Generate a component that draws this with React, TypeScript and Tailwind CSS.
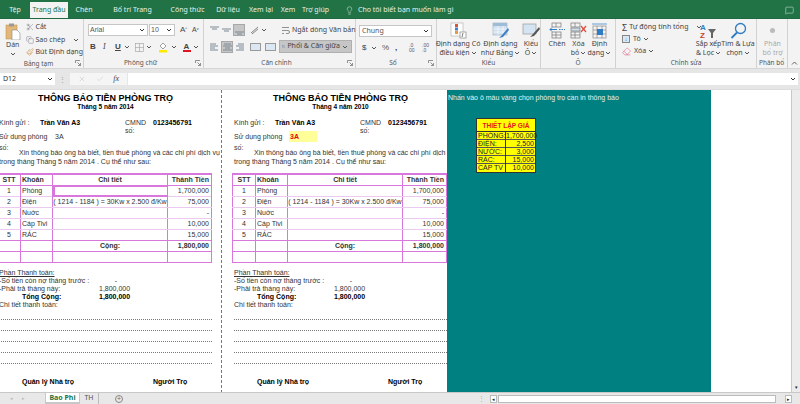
import React from "react";
import { Scissors, Copy, Paintbrush, Lightbulb, MessageSquare, X, Check, Eraser } from "lucide-react";

const Caret = ({ c = "#555" }: { c?: string }) => (
  <svg width="6" height="4" viewBox="0 0 6 4" className="shrink-0"><path d="M1 1l2 2 2-2" fill="none" stroke={c} strokeWidth="1" /></svg>
);
const Launcher = () => (
  <svg width="6" height="6" viewBox="0 0 6 6" className="shrink-0"><path d="M0.5 3V0.5H5M5.5 5.5L2.5 2.5M5.5 3v2.5H3" fill="none" stroke="#777" strokeWidth="0.8" /></svg>
);
const Lines = ({ kind }: { kind: string }) => {
  const rows: Record<string, number[][]> = {
    top: [[1, 10, 2], [3, 8, 4]],
    mid: [[1, 10, 4], [3, 8, 6]],
    bot: [[1, 10, 7], [3, 8, 9]],
    left: [[1, 7, 2], [1, 9, 4], [1, 6, 6], [1, 9, 8]],
    center: [[2, 9, 2], [1, 10, 4], [3, 8, 6], [1, 10, 8]],
    right: [[4, 10, 2], [2, 10, 4], [5, 10, 6], [2, 10, 8]],
  };
  return (
    <svg width="11" height="10" viewBox="0 0 11 10" className="shrink-0">
      {rows[kind].map((r, i) => <path key={i} d={`M${r[0]} ${r[2]}H${r[1]}`} stroke="#7d8a94" strokeWidth="1" />)}
    </svg>
  );
};
const Group = ({ w, label, children, right }: { w: string; label: string; children: React.ReactNode; right?: boolean }) => (
  <div className={`${w} shrink-0 h-full flex flex-col border-r border-[#d2d2d2]`}>
    <div className="h-[40px] flex">{children}</div>
    <div className="flex-1 flex items-center px-[2px] text-[#555] text-[6.5px]">
      <span className="flex-1 text-center whitespace-nowrap overflow-hidden">{label}</span>
      {right && <Launcher />}
    </div>
  </div>
);
const Big = ({ w, icon, l1, l2, gray }: { w: string; icon: React.ReactNode; l1: string; l2?: string; gray?: boolean }) => (
  <div className={`${w} shrink-0 flex flex-col items-center pt-[3px] ${gray ? "text-[#aaa]" : "text-[#444]"} text-[7px] leading-[8.5px]`}>
    <div className="h-[17px] flex items-center justify-center">{icon}</div>
    <div className="mt-[1px] whitespace-nowrap">{l1}</div>
    {l2 && <div className="whitespace-nowrap flex items-center gap-[1px]">{l2}{!gray && <Caret />}</div>}
  </div>
);

const CondIcon = () => (
  <svg width="17" height="17" viewBox="0 0 17 17"><rect x="1" y="1" width="12" height="13" fill="#fff" stroke="#aaa" strokeWidth=".6" /><rect x="5" y="2" width="3" height="3" fill="#d9553f" /><rect x="5" y="5.5" width="3" height="3" fill="#3f7fc4" /><rect x="5" y="9" width="3" height="3" fill="#e89a3c" /><rect x="10" y="10" width="6" height="6" fill="#fff" stroke="#777" strokeWidth=".6" /><path d="M13 11l-1 4" stroke="#444" strokeWidth=".7" /></svg>
);
const TableIcon = () => (
  <svg width="18" height="17" viewBox="0 0 18 17"><rect x="1" y="1" width="14" height="12" fill="#cfe1f1" stroke="#9ab" strokeWidth=".6" /><rect x="1" y="1" width="14" height="3" fill="#9dbcd8" /><path d="M1 7h14M1 10h14M6 4v9M11 4v9" stroke="#fff" strokeWidth=".6" /><path d="M16 6l-6 7-3 3 4-1 6-7z" fill="#3f7fc4" /></svg>
);
const CellStyleIcon = () => (
  <svg width="18" height="17" viewBox="0 0 18 17"><rect x="1" y="2" width="13" height="10" fill="#d5e4f2" stroke="#999" strokeWidth=".7" /><path d="M17 5l-6 7-3 3 4-1 6-7z" fill="#555" /></svg>
);
const InsertIcon = () => (
  <svg width="17" height="17" viewBox="0 0 17 17" fill="none" stroke="#777" strokeWidth=".7"><rect x="3" y="1" width="9" height="4" /><path d="M7 1v4" /><rect x="3" y="10" width="9" height="6" /><path d="M7 10v6M3 13h9" /><path d="M1 7.5h7M3 5.5l-2 2 2 2" stroke="#2f7cc4" strokeWidth="1" /><path d="M10 7.5h6" stroke="#2f7cc4" strokeWidth="1" strokeDasharray="1.5 1" /></svg>
);
const DeleteIcon = () => (
  <svg width="17" height="17" viewBox="0 0 17 17" fill="none" stroke="#777" strokeWidth=".7"><rect x="1" y="1" width="9" height="4" /><path d="M5 1v4" /><rect x="1" y="10" width="9" height="6" /><path d="M5 10v6M1 13h9" /><rect x="1" y="6" width="9" height="3" fill="#cfe1f1" /><path d="M11 4l5 6M16 4l-5 6" stroke="#e0483a" strokeWidth="1.2" /></svg>
);
const FormatIcon = () => (
  <svg width="17" height="17" viewBox="0 0 17 17" fill="none" stroke="#888" strokeWidth=".7"><path d="M1 2h15" stroke="#2f7cc4" /><rect x="2" y="4" width="13" height="12" /><path d="M6 4v12M11 4v12M2 8h13M2 12h13" /><rect x="6" y="7" width="6" height="6" fill="#2f7cc4" stroke="none" /></svg>
);
const SortIcon = () => (
  <svg width="19" height="17" viewBox="0 0 19 17"><path d="M9 7l3 4v5h2v-5l3-4z" fill="#666" /><text x="1" y="7.5" fontSize="8" fontFamily="Liberation Sans" fill="#2f7cc4" fontWeight="700">A</text><text x="1" y="16" fontSize="8" fontFamily="Liberation Sans" fill="#c9402f" fontWeight="700">Z</text></svg>
);
const FindIcon = () => (
  <svg width="17" height="17" viewBox="0 0 17 17" fill="none" stroke="#2f7cc4" strokeWidth="1.3"><circle cx="10.5" cy="6.5" r="5" /><path d="M7 10.5L1.5 16" strokeWidth="1.8" /></svg>
);

const Ribbon = () => (
  <div className="h-[50px] flex bg-[#f3f3f3] border-b border-[#d6d6d6] font-['Noto_Sans',sans-serif]">
    <Group w="w-[84px]" label="Bảng tạm" right>
      <div className="w-[26px] flex flex-col items-center pt-[4px] text-[7px] leading-[8px] text-[#444]">
        <svg width="16" height="17" viewBox="0 0 16 17"><rect x="1" y="2" width="11" height="14" fill="#e3b778" stroke="#b98d4d" strokeWidth=".5" /><rect x="4" y="0.5" width="5" height="3" fill="#999" /><path d="M7 7h5l3 3v7H7z" fill="#fff" stroke="#888" strokeWidth=".6" /></svg>
        <div className="mt-[1px]">Dán</div>
        <div className="mt-[3px]"><Caret /></div>
      </div>
      <div className="flex flex-col pt-[2px] text-[7px] text-[#444] leading-[12.5px]">
        <div className="flex items-center gap-[2px] h-[12.5px]"><Scissors size={8} strokeWidth={1.2} color="#667" />Cắt</div>
        <div className="flex items-center gap-[2px] h-[12.5px]"><Copy size={8} strokeWidth={1.2} color="#667" />Sao chép<span className="ml-[6px]"><Caret /></span></div>
        <div className="flex items-center gap-[2px] h-[12.5px] whitespace-nowrap"><Paintbrush size={8} strokeWidth={1.4} color="#c9862f" />Bút Định dạng</div>
      </div>
    </Group>
    <Group w="w-[120px]" label="Phông chữ" right>
      <div className="pl-[4px] pt-[5px] flex flex-col w-full">
        <div className="flex items-center">
          <div className="w-[60px] h-[12px] bg-white border border-[#c6c6c6] flex items-center justify-between px-[1px] pr-[2px] text-[7px] text-[#555] font-['Liberation_Sans',sans-serif]">Arial<Caret c="#333" /></div>
          <div className="ml-[1px] w-[26px] h-[12px] bg-white border border-[#c6c6c6] flex items-center justify-between px-[1px] pr-[2px] text-[7px] text-[#555] font-['Liberation_Sans',sans-serif]">10<Caret c="#333" /></div>
          <span className="ml-[5px] text-[8px] text-[#444] font-['Liberation_Sans',sans-serif] w-[12px]">A<sup className="text-[4px]">^</sup></span>
          <span className="text-[7px] text-[#444] font-['Liberation_Sans',sans-serif]">A<sup className="text-[4px]">v</sup></span>
        </div>
        <div className="flex items-center mt-[4px] text-[#444] font-['Liberation_Sans',sans-serif] text-[8px] h-[14px]">
          <span className="ml-[2px] w-[13px] font-bold">B</span>
          <span className="w-[12px] italic font-serif">I</span>
          <span className="w-[9px] font-bold underline">U</span>
          <Caret />
          <svg className="ml-[5px]" width="9" height="9" viewBox="0 0 9 9" fill="none" stroke="#aaa" strokeWidth=".7"><rect x=".5" y=".5" width="8" height="8" /><path d="M4.5 0v9M0 4.5h9" /></svg>
          <span className="ml-[2px]"><Caret /></span>
          <svg className="ml-[6px]" width="11" height="11" viewBox="0 0 11 11"><path d="M5 1l3 3-3 3-3-3z" fill="#fff" stroke="#777" strokeWidth=".7" /><rect x="1" y="8" width="8" height="2.5" fill="#ffea00" /></svg>
          <span className="ml-[2px]"><Caret /></span>
          <div className="ml-[5px] flex flex-col items-center leading-[7px] text-[8px] w-[9px]"><span className="font-bold">A</span><span className="w-[8px] h-[2px] bg-[#e0141e]" /></div>
          <span className="ml-[2px]"><Caret /></span>
        </div>
      </div>
    </Group>
    <Group w="w-[152px]" label="Căn chỉnh" right>
      <div className="flex pl-[5px] pt-[5px] w-full">
        <div className="flex flex-col">
          <div className="flex items-center h-[12px] gap-[1px]">
            <Lines kind="top" /><Lines kind="mid" /><div className="w-[12px] h-[12px] bg-[#c6c6c6] border border-[#a8a8a8] flex items-center justify-center"><Lines kind="bot" /></div>
            <svg className="ml-[4px]" width="10" height="10" viewBox="0 0 10 10" fill="none" stroke="#666" strokeWidth=".8"><path d="M1 8l7-6M2 9l6-5" /></svg>
            <Caret />
          </div>
          <div className="flex items-center h-[13px] gap-[1px] mt-[4px]">
            <Lines kind="left" /><div className="w-[12px] h-[12px] bg-[#c6c6c6] border border-[#a8a8a8] flex items-center justify-center"><Lines kind="center" /></div><Lines kind="right" />
            <span className="ml-[4px] w-[11px] h-[8px] border border-[#999] bg-[#dbe7f3]" />
            <span className="ml-[3px] w-[11px] h-[8px] border border-[#999] bg-[#dbe7f3]" />
          </div>
        </div>
        <div className="ml-[3px] flex flex-col text-[7px] text-[#444]">
          <div className="h-[12px] flex items-center gap-[2px] pl-[2px] whitespace-nowrap">
            <svg width="9" height="9" viewBox="0 0 9 9" fill="none" stroke="#777" strokeWidth=".8"><path d="M1 1.5h7M1 4.5h6a1.5 1.5 0 010 3H5M1 7.5h2" /></svg>Ngắt dòng Văn bản
          </div>
          <div className="mt-[4px] w-[73px] h-[13px] bg-[#c6c6c6] border border-[#b0b0b0] flex items-center pl-[2px] gap-[2px] whitespace-nowrap">
            <svg width="9" height="9" viewBox="0 0 9 9" fill="none" stroke="#57799a" strokeWidth=".7"><rect x=".5" y="1" width="8" height="7" /><path d="M2 4.5h5" /></svg>Phối &amp; Căn giữa<span className="ml-auto mr-[3px]"><Caret /></span>
          </div>
        </div>
      </div>
    </Group>
    <Group w="w-[81px]" label="Số" right>
      <div className="pl-[3px] pt-[6px] flex flex-col w-full">
        <div className="w-[73px] h-[12px] bg-white border border-[#c6c6c6] px-[2px] flex items-center justify-between text-[7px] text-[#555]">Chung<Caret c="#333" /></div>
        <div className="flex items-center mt-[4px] h-[13px] text-[#444] text-[8px] font-['Liberation_Sans',sans-serif]">
          <span className="ml-[3px] w-[9px]">$</span><Caret />
          <span className="ml-[5px] w-[12px] text-[#555]">%</span>
          <span className="ml-[1px] w-[14px] text-[#333] font-bold">,</span>
          <span className="w-[13px] text-[5px] leading-[5px] text-[#557]">.0<br />00</span>
          <span className="text-[5px] leading-[5px] text-[#557]">.00<br />.0</span>
        </div>
      </div>
    </Group>
    <Group w="w-[104px]" label="Kiểu">
      <Big w="w-[42px]" icon={<CondIcon />} l1="Định dạng Có" l2="điều kiện" />
      <Big w="w-[43px]" icon={<TableIcon />} l1="Định dạng" l2="như Bảng" />
      <Big w="w-[18px]" icon={<CellStyleIcon />} l1="Kiểu" l2="Ô" />
    </Group>
    <Group w="w-[75px]" label="Ô">
      <div className="w-[5px]" />
      <Big w="w-[22px]" icon={<InsertIcon />} l1="Chèn" l2="" />
      <Big w="w-[21px]" icon={<DeleteIcon />} l1="Xóa" l2="bỏ" />
      <Big w="w-[21px]" icon={<FormatIcon />} l1="Định" l2="dạng" />
    </Group>
    <Group w="w-[141px]" label="Chỉnh sửa">
      <div className="w-[78px] pl-[6px] pt-[2px] flex flex-col text-[7px] text-[#444]">
        <div className="h-[12px] flex items-center gap-[2px] whitespace-nowrap"><span className="text-[9px] w-[9px] leading-none">Σ</span>Tự động tính tổng<span className="ml-[6px]"><Caret /></span></div>
        <div className="h-[12px] flex items-center gap-[2px]"><span className="w-[8px] h-[8px] border border-[#888] bg-[#dbe7f3] text-[6px] leading-[6px] text-center text-[#2f7cc4]">↓</span><span className="ml-[1px]">Tô</span><Caret /></div>
        <div className="h-[12px] flex items-center gap-[2px]"><Eraser size={9} color="#e0557a" strokeWidth={1.4} /><span className="ml-[1px]">Xóa</span><Caret /></div>
      </div>
      <Big w="w-[29px]" icon={<SortIcon />} l1="Sắp xếp" l2="& Lọc" />
      <Big w="w-[30px]" icon={<FindIcon />} l1="Tìm & Lựa" l2="chọn" />
    </Group>
    <Group w="w-[31px]" label="Phân bổ t...">
      <Big w="w-[31px]" gray icon={<span className="w-[5px] h-[5px] rounded-full bg-[#bbb]" />} l1="Phân" l2="bổ trợ" />
    </Group>
    <div className="flex-1 flex items-end justify-center pb-[3px]"><svg width="7" height="4" viewBox="0 0 7 4"><path d="M1 3.5l2.5-2.5L6 3.5" fill="none" stroke="#555" strokeWidth=".9" /></svg></div>
  </div>
);

const Tabs = () => {
  const items: [string, string][] = [["Chèn", "w-[32px]"], ["Bố trí Trang", "w-[65px]"], ["Công thức", "w-[45px]"], ["Dữ liệu", "w-[36px]"], ["Xem lại", "w-[30px]"], ["Xem", "w-[24px]"], ["Trợ giúp", "w-[31px]"]];
  return (
    <div className="h-[19px] flex bg-[#217346] text-[#e6f0ea] text-[7px] font-['Noto_Sans',sans-serif] items-end border-b border-[#1d6a40]">
      <div className="w-[30px] h-[16px] flex items-center justify-center">Tệp</div>
      <div className="w-[38px] h-[16px] bg-[#f3f3f3] text-[#217346] flex items-center justify-center whitespace-nowrap">Trang đầu</div>
      {items.map(([t, w]) => <div key={t} className={`${w} h-[16px] flex items-center justify-center whitespace-nowrap`}>{t}</div>)}
      <div className="ml-[14px] h-[16px] flex items-center gap-[4px] whitespace-nowrap"><Lightbulb size={9} strokeWidth={1.3} />Cho tôi biết bạn muốn làm gì</div>
      <div className="ml-auto mr-[6px] h-[16px] flex items-center"><MessageSquare size={9} strokeWidth={1.3} /></div>
    </div>
  );
};

const FormulaBar = () => (
  <div className="h-[20px] flex items-center bg-[#e6e6e6] font-['Noto_Sans',sans-serif] text-[7px] text-[#333]">
    <div className="w-[55px] h-[12px] bg-white flex items-center justify-between pl-[3px] pr-[2px]">D12<Caret c="#333" /></div>
    <div className="w-[15px] text-center text-[#999] leading-none">⋮</div>
    <div className="w-[57px] h-[12px] bg-[#f5f5f5] flex items-center justify-around px-[3px] text-[#888]">
      <X size={8} strokeWidth={1} color="#aaa" /><Check size={8} strokeWidth={1} color="#aaa" /><span className="italic font-['Liberation_Serif',serif] text-[8px] text-[#444]">fx</span>
    </div>
    <div className="ml-[1px] flex-1 h-[12px] bg-white flex items-center justify-end pr-[2px] mr-[2px]"><Caret c="#333" /></div>
  </div>
);

const pink = "border-[#d877dc]";
const lightPink = "border-[#ecc9ee]";
const gridCols = "grid grid-cols-[24px_32px_115px_44px]";

const Row = ({ a, b, c, d, strong, selected, bold }: { a?: string; b?: string; c?: string; d?: string; strong?: boolean; selected?: boolean; bold?: boolean }) => (
  <div className={`${gridCols} h-[11px] border-b ${strong ? pink : lightPink} leading-[10px] ${bold ? "font-bold" : ""}`}>
    <div className={`border-r ${pink} text-center border-l`}>{a}</div>
    <div className={`border-r ${pink} pl-[1px]`}>{b}</div>
    <div className={`border-r ${pink} text-center whitespace-nowrap ${selected ? "border-2 border-[#217346] -mt-[1px] h-[12px]" : ""}`}>{c}</div>
    <div className={`border-r ${pink} text-right pr-[2px]`}>{d}</div>
  </div>
);

const Page = ({ month, yellow, selected, line }: { month: string; yellow?: boolean; selected?: boolean; line?: boolean }) => (
  <div className={`shrink-0 h-[303px] overflow-hidden ${line ? "w-[235px] -ml-[13px] border-r border-dashed border-[#777]" : "w-[225px]"} bg-white pl-[10px] pt-[3px] text-[7px] text-[#333] font-['Liberation_Sans',sans-serif]`}>
    <div className="w-[215px] pl-[2px]">
      <div className="h-[10px] leading-[10px] text-center font-bold text-[9px] text-black">THÔNG BÁO TIỀN PHÒNG TRỌ</div>
      <div className="h-[8px] leading-[8px] text-center font-bold text-[6.5px] text-black">{month}</div>
      <div className="mt-[8px] h-[8px] leading-[8px] flex">
        <span className="w-[41px]">Kính gửi :</span><b className="w-[85px] text-black">Trần Văn A3</b><span className="w-[28px]">CMND số:</span><b className="text-black">0123456791</b>
      </div>
      <div className="mt-[4px] h-[11px] leading-[11px] flex">
        <span className="w-[55px]">Sử dụng phòng số:</span>
        <span className={`w-[28px] pl-[1px] ${yellow ? "bg-[#ffff99] text-[#e00] font-bold" : ""}`}>3A</span>
      </div>
      <div className="mt-[6px] h-[9px] leading-[9px] pl-[20px] whitespace-nowrap">Xin thông báo ông bà biết, tiền thuê phòng và các chi phí dịch vụ khác</div>
      <div className="h-[9px] leading-[9px] whitespace-nowrap">trong tháng Tháng 5 năm 2014 . Cụ thể như sau:</div>
    </div>
    <div className={`mt-[7px] w-[215px] border-t-2 ${pink}`}>
      <Row a="STT" b="Khoản" c="Chi tiết" d="Thành Tiền" strong bold />
      <Row a="1" b="Phòng" d="1,700,000" selected={selected} />
      <Row a="2" b="Điện" c="( 1214 - 1184 ) = 30Kw x 2.500 đ/Kw" d="75,000" />
      <Row a="3" b="Nuớc" d="-" />
      <Row a="4" b="Cáp Tivi" d="10,000" />
      <Row a="5" b="RÁC" d="15,000" strong />
      <Row c="Cộng:" d="1,800,000" strong bold />
      <Row strong />
    </div>
    <div className="mt-[6px] w-[215px] pl-[2px]">
      <div className="h-[8px] leading-[8px] underline">Phần Thanh toán:</div>
      <div className="h-[8px] leading-[8px] flex"><span className="w-[105px] whitespace-nowrap">-Số tiền còn nợ tháng trước :</span><span className="w-[21px] text-right pr-[8px]">-</span></div>
      <div className="h-[8px] leading-[8px] flex"><span className="w-[100px]">-Phải trả tháng này:</span><span className="w-[26px] text-right">1,800,000</span></div>
      <div className="h-[8px] leading-[8px] flex font-bold text-black"><span className="w-[23px]" /><span className="w-[77px]">Tổng Cộng:</span><span className="w-[26px] text-right">1,800,000</span></div>
      <div className="h-[8px] leading-[8px]">Chi tiết thanh toán:</div>
    </div>
    <div className="w-[213px] ml-[2px]">
      {[0, 1, 2, 3, 4].map((i) => <div key={i} className="h-[11px] border-b border-dotted border-[#777]" />)}
    </div>
    <div className="mt-[14px] h-[8px] leading-[8px] flex font-bold text-black">
      <span className="w-[25px]" /><span className="w-[131px]">Quản lý Nhà trọ</span><span>Người Trọ</span>
    </div>
  </div>
);

const Teal = () => (
  <div className="w-[264px] shrink-0 h-full bg-[#008080] font-['Liberation_Sans',sans-serif] text-[7px] text-[#e3f1f1]">
    <div className="pl-[1px] pt-[4px] h-[28px] leading-[8px] whitespace-nowrap">Nhấn vào ô màu vàng chọn phòng trọ cần in thông báo</div>
    <div className="ml-[29px] w-[60px] border border-[#333] bg-[#ffff00] text-[#222]">
      <div className="h-[13px] leading-[13px] text-center text-[6.5px] font-bold text-[#e8141c] border-b border-[#333]">THIẾT LẬP GIÁ</div>
      {[["PHÒNG:", "1,700,000"], ["ĐIỆN:", "2,500"], ["NƯỚC:", "3,000"], ["RÁC:", "15,000"], ["CÁP TV", "10,000"]].map(([k, v]) => (
        <div key={k} className="grid grid-cols-[29px_1fr] h-[8px] leading-[7.5px] border-b border-[#555] last:border-b-0 last:h-[7.5px]">
          <span className="pl-[1px] border-r border-[#333]">{k}</span><span className="text-right pr-[1px]">{v}</span>
        </div>
      ))}
    </div>
  </div>
);

const Bottom = () => (
  <div className="h-[12px] flex bg-[#e8e8e8] border-t border-[#c8c8c8] font-['Noto_Sans',sans-serif] text-[#888] text-[7px] items-stretch">
    <div className="w-[45px] flex items-center pl-[10px] gap-[9px] text-[#bbb] text-[5px]"><span>◂</span><span>▸</span></div>
    <div className="w-[35px] bg-white border-b-2 border-[#217346] text-center font-bold text-[#217346] leading-[9px] border-x border-[#c8c8c8]">Bao Phi</div>
    <div className="w-[19px] text-center text-[#555] leading-[10px] border-r border-[#bbb]">TH</div>
    <div className="ml-[16px] flex items-center"><span className="w-[8px] h-[8px] rounded-full border border-[#888] text-center text-[7px] leading-[6px] text-[#666]">+</span></div>
    <div className="ml-[355px] flex items-center text-[#aaa] leading-none">⋮</div>
    <div className="ml-[5px] flex items-center">
      <span className="w-[7px] h-[8px] bg-white border border-[#bbb] text-[#222] text-[5px] leading-[6px] text-center">◂</span>
      <span className="ml-[1px] w-[278px] h-[8px] bg-white border border-[#bbb]" />
      <span className="ml-[9px] w-[7px] h-[8px] bg-white border border-[#bbb] text-[#222] text-[5px] leading-[6px] text-center">▸</span>
    </div>
  </div>
);

export default function App() {
  return (
    <div className="w-[800px] h-[404px] overflow-hidden flex flex-col bg-white">
      <Tabs />
      <Ribbon />
      <FormulaBar />
      <div className="h-[303px] flex overflow-hidden border-t border-[#ddd]">
        <Page month="Tháng 5 năm 2014" selected line />
        <Page month="Tháng 4 năm 2010" yellow />
        <Teal />
        <div className="flex-1 bg-white" />
        <div className="w-[9px] bg-[#ececec] border-l border-[#c8c8c8] flex items-end justify-center text-[5px] text-[#222] pb-[1px]">▾</div>
      </div>
      <Bottom />
    </div>
  );
}
